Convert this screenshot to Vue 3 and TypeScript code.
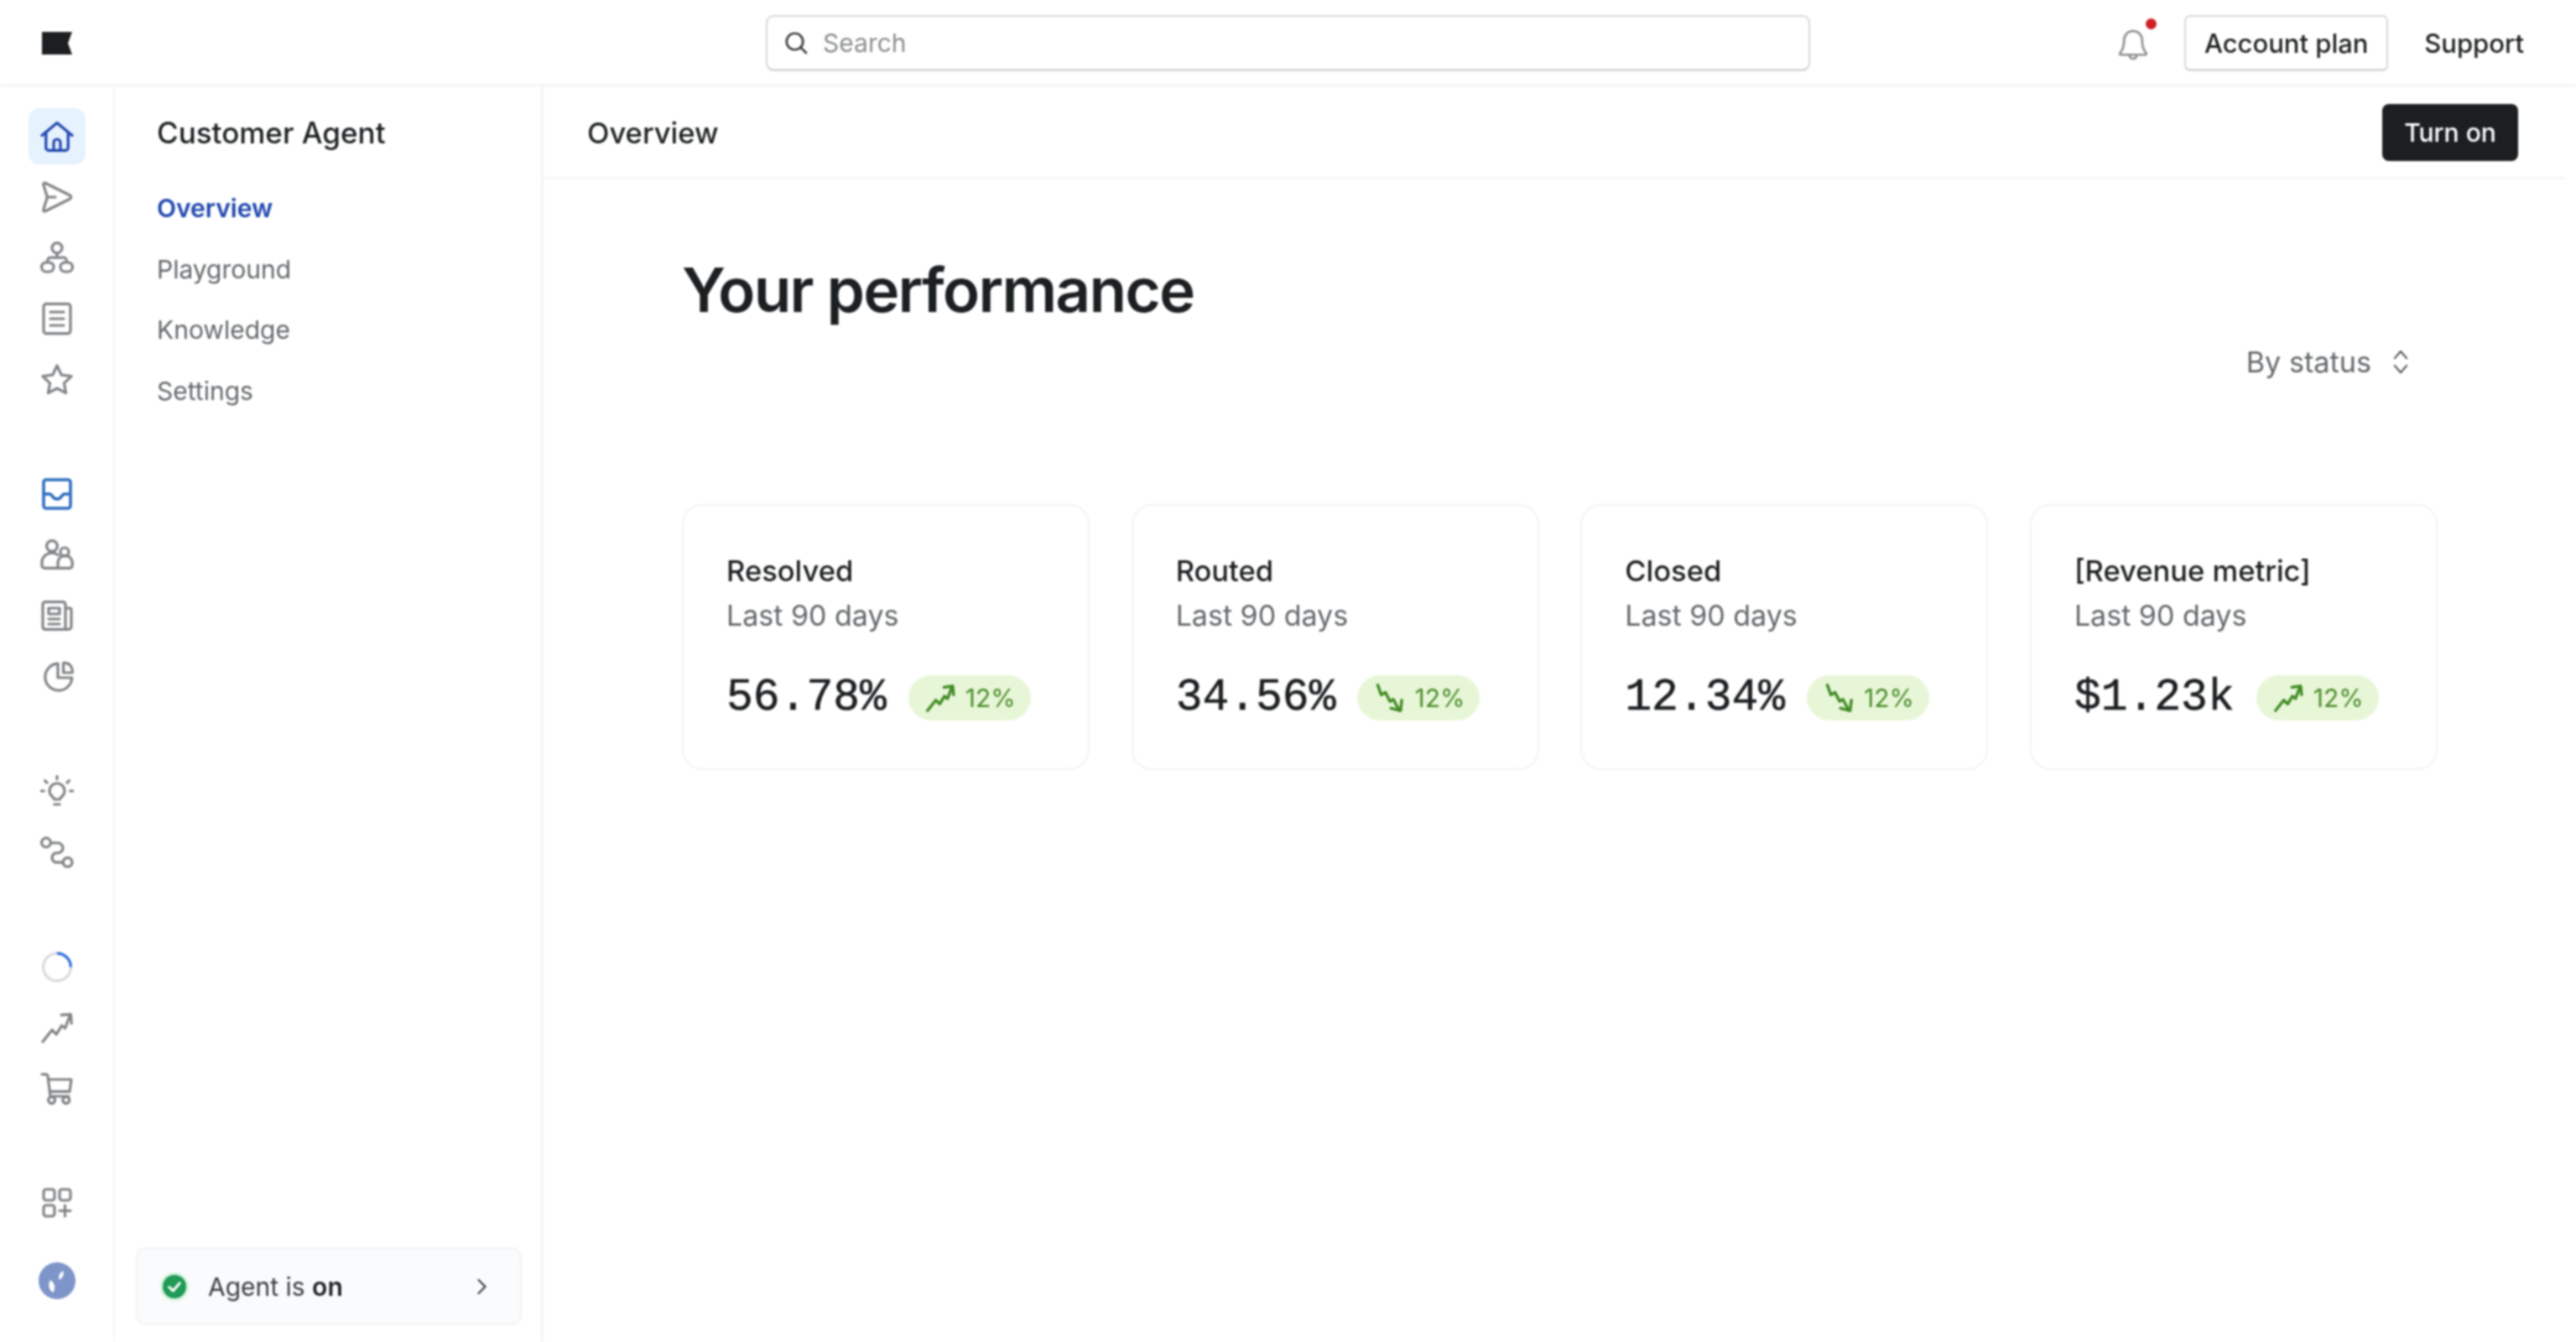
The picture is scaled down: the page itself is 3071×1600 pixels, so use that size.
<script setup lang="ts">
const icons: Record<string, string> = {
  home: "M1 9.2 10 1.8l9 7.4M3.4 7.6v9a1.6 1.6 0 0 0 1.6 1.6h10a1.6 1.6 0 0 0 1.6-1.6v-9M8 18v-4.5a2 2 0 0 1 4 0V18",
  send: "M3 1.6 17.6 8.9a1.2 1.2 0 0 1 0 2.2L3 18.4a.8.8 0 0 1-1.1-1L4.2 10 1.9 2.6a.8.8 0 0 1 1.1-1ZM4.2 10H9",
  tree: "M13 3.8a3 3 0 0 1-6 0 3 3 0 0 1 6 0ZM8 15.2a2.8 2.8 0 0 1-2.8 2.8H3.6a2.8 2.8 0 0 1 0-5.6h1.6A2.8 2.8 0 0 1 8 15.2ZM19.2 15.2a2.8 2.8 0 0 1-2.8 2.8h-1.6a2.8 2.8 0 0 1 0-5.6h1.6a2.8 2.8 0 0 1 2.8 2.8ZM10 6.8v2.8M4.4 12.4v-1.3a1.5 1.5 0 0 1 1.5-1.5h8.2a1.5 1.5 0 0 1 1.5 1.5v1.3",
  doc: "M3.5 1.2h13A1.5 1.5 0 0 1 18 2.7v14.6a1.5 1.5 0 0 1-1.5 1.5h-13A1.5 1.5 0 0 1 2 17.3V2.7a1.5 1.5 0 0 1 1.5-1.5ZM6 6h8M6 10h8M6 14h8",
  star: "M10 1.5l2.6 5.5 6 .8-4.4 4.1 1.1 5.9L10 15l-5.3 2.8 1.1-5.9-4.4-4.1 6-.8z",
  inbox: "M3.5 1.5h13A1.5 1.5 0 0 1 18 3v14a1.5 1.5 0 0 1-1.5 1.5h-13A1.5 1.5 0 0 1 2 17V3a1.5 1.5 0 0 1 1.5-1.5ZM2 10h3.5c1 0 1.3.6 1.8 1.4.6 1 1.5 1.6 2.7 1.6s2.1-.6 2.7-1.6c.5-.8.8-1.4 1.8-1.4H18",
  users: "M10.2 5a3.2 3.2 0 1 1-6.4 0 3.2 3.2 0 0 1 6.4 0ZM17 8.5a2.5 2.5 0 1 1-5 0 2.5 2.5 0 0 1 5 0ZM10.5 18.2H2.6A1.6 1.6 0 0 1 1 16.6V14a6 6 0 0 1 9.6-3.6M10.5 18.2h7a1.6 1.6 0 0 0 1.6-1.6V15a4.3 4.3 0 0 0-8.6 0v3.2Z",
  news: "M3 1.8h10.5A1.5 1.5 0 0 1 15 3.3v14.9H3a1.5 1.5 0 0 1-1.5-1.5V3.3A1.5 1.5 0 0 1 3 1.8ZM15 5.5h2.5a1 1 0 0 1 1 1v10a1.7 1.7 0 0 1-1.7 1.7H15M5 5.5h6.5V9H5ZM5 12h6.5M5 15h6.5",
  pie: "M10.5 2.6a8 8 0 1 0 8.4 8.4h-8.4ZM13.8 2.2h.8a4.5 4.5 0 0 1 4.5 4.5V8h-5.3Z",
  bulb: "M14.5 9.5c0 1.6-.9 2.8-2 3.6-.5.4-.7.9-.7 1.4H8.2c0-.5-.2-1-.7-1.4-1.1-.8-2-2-2-3.6a4.5 4.5 0 0 1 9 0ZM8.4 17.5h3.2M10 .8v1.6M2.8 3.4 4 4.6M17.2 3.4 16 4.6M.6 9.5h1.6M17.8 9.5h1.6",
  route: "M6.2 3.8a2.7 2.7 0 1 1-5.4 0 2.7 2.7 0 0 1 5.4 0ZM19 15.5a2.7 2.7 0 1 1-5.4 0 2.7 2.7 0 0 1 5.4 0ZM6.2 4h4.3a3 3 0 0 1 0 6H9a3 3 0 0 0 0 5.6h4.6",
  trend: "M1.5 18.5 7 11.5l2.6 2.6 3.2-5.2 2 1.6 3-8M12.6 2.6l5.6-.4.4 5.4",
  cart: "M1 1.4h2.2c.7 0 1.2.4 1.3 1.1L6 14.5h11M4.9 4.5h13.6l-1 7.2H5.8M8.8 16.8a2 2 0 1 1-4 0 2 2 0 0 1 4 0ZM17.4 16.8a2 2 0 1 1-4 0 2 2 0 0 1 4 0Z",
  apps: "M3.5 2H7a1.5 1.5 0 0 1 1.5 1.5V7A1.5 1.5 0 0 1 7 8.5H3.5A1.5 1.5 0 0 1 2 7V3.5A1.5 1.5 0 0 1 3.5 2ZM13 2h3.5A1.5 1.5 0 0 1 18 3.5V7a1.5 1.5 0 0 1-1.5 1.5H13A1.5 1.5 0 0 1 11.5 7V3.5A1.5 1.5 0 0 1 13 2ZM3.5 11.5H7A1.5 1.5 0 0 1 8.5 13v3.5A1.5 1.5 0 0 1 7 18H3.5A1.5 1.5 0 0 1 2 16.5V13a1.5 1.5 0 0 1 1.5-1.5ZM14.75 11.5V18M11.5 14.75H18",
};

const trendUp = "M1.5 18.5 7 11.5l2.6 2.6 3.2-5.2 2 1.6 3-8M12.4 3l5.8-.8.6 5.8";
const trendDown = "M2.5 1.5 4.8 8l2.8-1.6 3 6 2.2-1.4 4 7.5M18.4 11.5l-.8 7-6.4-1.6";

const railGroups = [
  ["home", "send", "tree", "doc", "star"],
  ["inbox", "users", "news", "pie"],
  ["bulb", "route"],
  ["spinner", "trend", "cart"],
  ["apps"],
];

const subNav = ["Overview", "Playground", "Knowledge", "Settings"];

const metrics = [
  { title: "Resolved", value: "56.78%", up: true },
  { title: "Routed", value: "34.56%", up: false },
  { title: "Closed", value: "12.34%", up: false },
  { title: "[Revenue metric]", value: "$1.23k", up: true },
];
</script>

<template>
  <div class="app">
    <header class="topbar">
      <svg class="logo" viewBox="0 0 36 27"><path d="M0 0h36l-5 13.5L36 27H0z" /></svg>
      <div class="search">
        <svg class="search-icon" viewBox="0 0 20 20">
          <path d="M15.5 9a6.5 6.5 0 1 1-13 0 6.5 6.5 0 0 1 13 0ZM13.6 13.6 18 18" />
        </svg>
        <span>Search</span>
      </div>
      <div class="top-actions">
        <span class="bell">
          <svg viewBox="0 0 20 20">
            <path d="M10 1.5c-3.4 0-5.4 2.6-5.4 5.8 0 3.8-.8 5.6-2.4 7.4-.3.4 0 .9.4.9h14.8c.4 0 .7-.5.4-.9-1.6-1.8-2.4-3.6-2.4-7.4 0-3.2-2-5.8-5.4-5.8ZM7.8 15.8a2.2 2.2 0 0 0 4.4 0" />
          </svg>
          <i class="bell-dot" />
        </span>
        <button class="plan">Account plan</button>
        <span class="support">Support</span>
      </div>
    </header>

    <div class="body">
      <nav class="rail">
        <div v-for="(group, g) in railGroups" :key="g" class="rail-group">
          <div
            v-for="name in group"
            :key="name"
            class="rail-item"
            :class="{ active: name === 'home', inbox: name === 'inbox' }"
          >
            <svg v-if="name === 'spinner'" class="rail-icon" viewBox="0 0 20 20">
              <circle class="spin-track" cx="10" cy="10" r="8.2" />
              <path class="spin-arc" d="M10 1.8A8.2 8.2 0 0 1 18.2 10" />
            </svg>
            <svg v-else class="rail-icon" viewBox="0 0 20 20"><path :d="icons[name]" /></svg>
          </div>
        </div>
        <div class="avatar">
          <svg viewBox="0 0 44 44">
            <path d="M17 36c-5-3-6-9-3-15 5 3 7 10 3 15ZM25 21c-2-3-1-7 4-11 2 4 0 8-4 11Z" />
          </svg>
        </div>
      </nav>

      <aside class="subnav">
        <h2 class="subnav-title">Customer Agent</h2>
        <ul class="subnav-list">
          <li v-for="(item, i) in subNav" :key="item" :class="{ current: i === 0 }">{{ item }}</li>
        </ul>
        <div class="agent">
          <span class="agent-check">
            <svg viewBox="0 0 20 20"><path d="M5.5 10.5 8.8 13.5 14.5 7" /></svg>
          </span>
          <span class="agent-text">Agent is <b>on</b></span>
          <svg class="agent-chevron" viewBox="0 0 20 20"><path d="M6.5 2 14.5 10 6.5 18" /></svg>
        </div>
      </aside>

      <main class="main">
        <div class="main-head">
          <span class="main-title">Overview</span>
          <button class="turn-on">Turn on</button>
        </div>
        <section class="content">
          <h1 class="heading">Your performance</h1>
          <div class="status">
            <span>By status</span>
            <svg viewBox="0 0 20 30"><path d="M3.5 11 10 3.5 16.5 11M3.5 19 10 26.5 16.5 19" /></svg>
          </div>
          <div class="cards">
            <article v-for="m in metrics" :key="m.title" class="card">
              <div class="card-title">{{ m.title }}</div>
              <div class="card-sub">Last 90 days</div>
              <div class="card-row">
                <span class="card-value">{{ m.value }}</span>
                <span class="badge">
                  <svg viewBox="0 0 20 20"><path :d="m.up ? trendUp : trendDown" /></svg>
                  12%
                </span>
              </div>
            </article>
          </div>
        </section>
      </main>
    </div>
  </div>
</template>

<style>
html,
body {
  margin: 0;
  background: #fff;
}
</style>

<style scoped>
.app {
  height: 1600px;
  width: 3071px;
  display: flex;
  flex-direction: column;
  overflow: hidden;
  font-family: Inter, "Liberation Sans", sans-serif;
  color: #1c1f21;
  filter: blur(0.8px);
}

svg {
  display: block;
  fill: none;
  stroke: currentColor;
  stroke-linecap: round;
  stroke-linejoin: round;
}

button {
  font: inherit;
}

.topbar {
  height: 103px;
  flex: none;
  box-sizing: border-box;
  border-bottom: 3px solid #f3f4f5;
  display: flex;
  align-items: center;
  padding: 3px 62px 0 50px;
}

.logo {
  width: 36px;
  height: 27px;
  fill: #1c1f21;
  stroke: none;
}

.search {
  width: 1245px;
  height: 67px;
  box-sizing: border-box;
  margin-left: 827px;
  border: 2px solid #d5d8da;
  border-bottom-width: 3px;
  border-radius: 9px;
  display: flex;
  align-items: center;
  gap: 17px;
  padding-left: 19px;
  font-size: 30px;
  color: #8a8d90;
}

.search-icon {
  width: 30px;
  height: 30px;
  stroke-width: 1.8;
  color: #3a3d40;
}

.top-actions {
  margin-left: auto;
  display: flex;
  align-items: center;
  font-size: 31px;
  font-weight: 500;
}

.bell {
  position: relative;
  width: 40px;
  height: 40px;
  color: #8a8d90;
  margin-right: 41px;
  margin-top: 4px;
}

.bell svg {
  width: 40px;
  height: 40px;
  stroke-width: 1.3;
}

.bell-dot {
  position: absolute;
  top: -12px;
  right: -8px;
  width: 13px;
  height: 13px;
  border-radius: 50%;
  background: #cf1f24;
}

.plan {
  width: 243px;
  height: 67px;
  background: #fff;
  border: 2px solid #d5d8da;
  border-bottom-width: 3px;
  border-radius: 7px;
  color: #1c1f21;
  font-weight: 500;
  padding: 0;
}

.support {
  margin-left: 43px;
}

.body {
  flex: 1;
  display: flex;
  min-height: 0;
}

.rail {
  width: 137px;
  flex: none;
  box-sizing: border-box;
  border-right: 2px solid #f6f7f8;
  padding-top: 26px;
  display: flex;
  flex-direction: column;
  align-items: center;
  gap: 69px;
}

.rail-group {
  display: flex;
  flex-direction: column;
  gap: 5.5px;
}

.rail-group:nth-child(3) {
  margin-top: 2px;
}

.rail-item {
  width: 68px;
  height: 67px;
  border-radius: 13px;
  display: flex;
  align-items: center;
  justify-content: center;
  color: #808386;
}

.rail-item.active {
  background: #e6f2fd;
  color: #1f45ae;
}

.rail-item.inbox {
  color: #2b6cbf;
}

.rail-icon {
  width: 40px;
  height: 40px;
  stroke-width: 1.6;
}

.rail-item.inbox .rail-icon {
  stroke-width: 1.8;
}

.spin-track {
  stroke: #d8dadc;
}

.spin-arc {
  stroke: #2a6ee0;
  stroke-linecap: butt;
}

.avatar {
  width: 44px;
  height: 44px;
  border-radius: 50%;
  background: #7d95c9;
  margin-top: -31px;
}

.avatar svg {
  width: 44px;
  height: 44px;
  fill: #fff;
  stroke: none;
}

.subnav {
  width: 511px;
  flex: none;
  box-sizing: border-box;
  border-right: 3px solid #f3f4f5;
  padding: 0 23px 20px 25px;
  display: flex;
  flex-direction: column;
}

.subnav-title {
  margin: 0 0 0 25px;
  height: 109px;
  line-height: 111px;
  font-size: 35px;
  font-weight: 500;
}

.subnav-list {
  list-style: none;
  margin: 0 0 0 25px;
  padding: 0;
  flex: 1;
  font-size: 30px;
  color: #63676a;
}

.subnav-list li {
  height: 72.5px;
  line-height: 72.5px;
}

.subnav-list li.current {
  color: #1f45ae;
  font-weight: 600;
}

.agent {
  height: 93px;
  box-sizing: border-box;
  border: 2px solid #f3f4f6;
  border-radius: 12px;
  background: #fafbfc;
  display: flex;
  align-items: center;
  padding: 0 36px 0 30px;
  font-size: 30px;
  color: #3a3d40;
}

.agent-check {
  width: 28px;
  height: 28px;
  border-radius: 50%;
  background: #1f9a57;
  box-shadow: 0 0 0 3px #d5f3dd;
  color: #fff;
  margin-right: 26px;
}

.agent-check svg {
  width: 28px;
  height: 28px;
  stroke-width: 2.2;
}

.agent-text {
  flex: 1;
}

.agent-text b {
  font-weight: 600;
  color: #1c1f21;
}

.agent-chevron {
  width: 20px;
  height: 20px;
  stroke-width: 2.2;
}

.main {
  flex: 1;
  min-width: 0;
  display: flex;
  flex-direction: column;
}

.main-head {
  height: 111px;
  flex: none;
  box-sizing: border-box;
  border-bottom: 3px solid #f5f6f7;
  margin-right: 13px;
  padding: 2px 56px 0 52px;
  display: flex;
  align-items: center;
  justify-content: space-between;
}

.main-title {
  font-size: 34.5px;
  font-weight: 500;
}

.turn-on {
  width: 162px;
  height: 68px;
  background: #1c1f21;
  color: #fff;
  border: none;
  border-radius: 8px;
  font-size: 30px;
  font-weight: 500;
  padding: 0;
}

.content {
  padding: 87px 165px 0;
}

.heading {
  margin: 0;
  height: 90px;
  line-height: 90px;
  font-size: 73px;
  font-weight: 600;
  letter-spacing: -1.8px;
}

.status {
  margin-top: 20px;
  height: 40px;
  display: flex;
  justify-content: flex-end;
  align-items: center;
  gap: 24px;
  padding-right: 33px;
  font-size: 34.2px;
  color: #63676a;
}

.status svg {
  width: 22px;
  height: 33px;
  stroke-width: 1.8;
  color: #44474a;
}

.cards {
  margin-top: 150px;
  display: grid;
  grid-template-columns: repeat(4, 1fr);
  gap: 49.5px;
}

.card {
  height: 317px;
  box-sizing: border-box;
  border: 2px solid #f2f3f4;
  border-radius: 24px;
  padding: 56px 51px 0;
}

.card-title {
  font-size: 34.5px;
  font-weight: 500;
  line-height: 44px;
}

.card-sub {
  font-size: 34px;
  line-height: 44px;
  margin-top: 9px;
  color: #63676a;
}

.card-row {
  margin-top: 46px;
  display: flex;
  align-items: center;
  gap: 26px;
}

.card-value {
  font-family: "Liberation Mono", "DejaVu Sans Mono", monospace;
  font-size: 53px;
  line-height: 60px;
  -webkit-text-stroke: 0.6px currentColor;
}

.badge {
  height: 54px;
  width: 146px;
  box-sizing: border-box;
  border-radius: 27px;
  background: #e8f6d8;
  color: #4a8c2a;
  display: flex;
  align-items: center;
  gap: 12px;
  padding-left: 20px;
  font-size: 30px;
}

.badge svg {
  width: 36px;
  height: 36px;
  stroke-width: 1.9;
  flex: none;
  color: #3f8a22;
}
</style>
